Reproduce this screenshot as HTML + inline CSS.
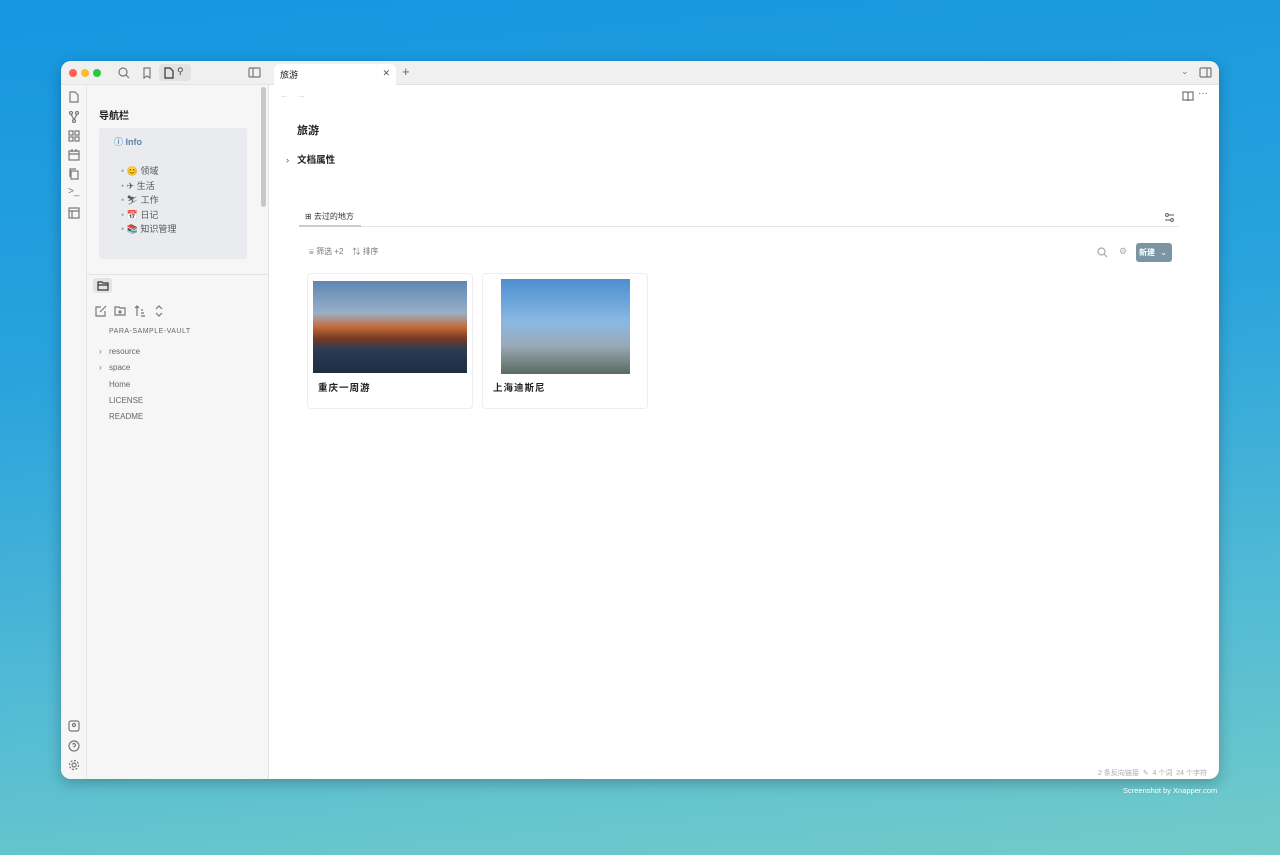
<!DOCTYPE html>
<html><head><meta charset="utf-8"><style>
*{box-sizing:border-box;margin:0;padding:0}
body{width:1280px;height:855px;overflow:hidden;font-family:"Liberation Sans","Noto Sans CJK SC",sans-serif;background:linear-gradient(175deg,#1596e0 0%,#2aa3dc 40%,#55bcd4 75%,#72cbc8 100%);position:relative}
.win{position:absolute;left:61px;top:61px;width:1158px;height:718px;background:#fff;border-radius:10px;overflow:hidden;box-shadow:0 4px 14px rgba(0,0,0,.25)}
.ribbon{position:absolute;left:0;top:0;width:26px;height:100%;background:#f6f6f6;border-right:1px solid #e6e6e6}
.side{position:absolute;left:26px;top:0;width:182px;height:100%;background:#f6f6f6;border-right:1px solid #e3e3e3}
.top{position:absolute;left:0;top:0;width:208px;height:24px;background:#f0f0f0;border-bottom:1px solid #e3e3e3}
.dot{position:absolute;top:8px;width:8px;height:8px;border-radius:50%}
.ic{position:absolute;stroke:#777;fill:none;stroke-width:1.2}
.main{position:absolute;left:208px;top:0;right:0;height:100%}
.tabbar{height:24px;background:#f0f0f0;border-bottom:1px solid #e3e3e3;position:relative}
.tab{position:absolute;left:5px;top:3px;width:122px;height:22px;background:#fff;border-radius:6px 6px 0 0;font-size:9px;padding:4px 6px;color:#222}
.t{position:absolute;white-space:nowrap}
.card{position:absolute;top:212px;width:166px;height:136px;border:1px solid #eee;border-radius:4px;background:#fff}
</style></head><body>
<div class="win">
 <div class="top">
  <div class="dot" style="left:8px;background:#fe5f57"></div>
  <div class="dot" style="left:20px;background:#febc2e"></div>
  <div class="dot" style="left:32px;background:#28c840"></div>
  <svg class="ic" style="left:57px;top:6px" width="12" height="12"><circle cx="5" cy="5" r="4"/><path d="M8 8l3 3"/></svg>
  <svg class="ic" style="left:80px;top:6px" width="12" height="12"><path d="M3 1h6v10l-3-2-3 2z"/></svg>
  <div style="position:absolute;left:98px;top:3px;width:32px;height:17px;background:#e2e2e2;border-radius:4px"></div>
  <svg class="ic" style="left:102px;top:6px;stroke:#333" width="12" height="12"><path d="M2 1h5l3 3v7H2z"/></svg>
  <span class="t" style="left:116px;top:5px;font-size:9px;color:#444">⚲</span>
  <svg class="ic" style="left:187px;top:6px" width="13" height="12"><rect x="1" y="1" width="11" height="9" rx="1"/><path d="M5 1v9"/></svg>
 </div>
 <div class="ribbon" style="top:24px">
  <svg class="ic" style="left:7px;top:6px" width="12" height="12"><path d="M2 1h5l3 3v7H2z"/></svg>
  <svg class="ic" style="left:7px;top:26px" width="12" height="12"><circle cx="3" cy="2" r="1.5"/><circle cx="9" cy="2" r="1.5"/><circle cx="6" cy="10" r="1.5"/><path d="M3 3l3 6M9 3l-3 6"/></svg>
  <svg class="ic" style="left:7px;top:45px" width="12" height="12"><rect x="1" y="1" width="4" height="4"/><rect x="7" y="1" width="4" height="4"/><rect x="1" y="7" width="4" height="4"/><rect x="7" y="7" width="4" height="4"/></svg>
  <svg class="ic" style="left:7px;top:64px" width="12" height="12"><rect x="1" y="2" width="10" height="9"/><path d="M1 5h10M4 0v3M8 0v3"/></svg>
  <svg class="ic" style="left:7px;top:83px" width="12" height="12"><rect x="3" y="3" width="7" height="8"/><path d="M2 9V1h6"/></svg>
  <span class="t" style="left:7px;top:101px;font-size:10px;color:#777">&gt;_</span>
  <svg class="ic" style="left:7px;top:122px" width="12" height="12"><rect x="1" y="1" width="10" height="10"/><path d="M1 4h10M4 4v7"/></svg>
  <svg class="ic" style="left:7px;top:635px" width="12" height="12"><rect x="1" y="1" width="10" height="10" rx="2"/><circle cx="6" cy="5" r="1.5"/></svg>
  <svg class="ic" style="left:7px;top:655px" width="12" height="12"><circle cx="6" cy="6" r="5"/><path d="M4.5 4.5a1.5 1.5 0 1 1 1.5 2v1"/></svg>
  <svg class="ic" style="left:7px;top:674px" width="12" height="12"><circle cx="6" cy="6" r="2"/><circle cx="6" cy="6" r="4.5" stroke-dasharray="2 1.5"/></svg>
 </div>
 <div class="side" style="top:24px;height:694px">
  <div style="position:absolute;right:2px;top:2px;width:5px;height:120px;background:#c8c8c8;border-radius:3px"></div>
  <div class="t" style="left:12px;top:22px;font-size:10px;font-weight:bold;color:#222">导航栏</div>
  <div style="position:absolute;left:12px;top:43px;width:148px;height:131px;background:#e9ebee;border-radius:3px"></div>
  <div class="t" style="left:27px;top:50px;font-size:9px;color:#5b82ac;font-weight:bold">ⓘ Info</div>
  <div class="t" style="left:34px;top:79px;font-size:9px;color:#555;line-height:14.5px">
   <span style="color:#aaa">•</span> 😊 领域<br><span style="color:#aaa">•</span> ✈ 生活<br><span style="color:#aaa">•</span> ⛷ 工作<br><span style="color:#aaa">•</span> 📅 日记<br><span style="color:#aaa">•</span> 📚 知识管理</div>
  <div style="position:absolute;left:0;top:189px;width:181px;height:1px;background:#e3e3e3"></div>
  <div style="position:absolute;left:6px;top:193px;width:19px;height:15px;background:#e4e4e4;border-radius:3px"></div>
  <svg class="ic" style="left:10px;top:195px;stroke:#333" width="12" height="11"><path d="M1 2h4l1 1h5v7H1z M1 5h10"/></svg>
  <svg class="ic" style="left:8px;top:220px" width="12" height="12"><path d="M10 6v5H1V2h5M5 7l6-6"/></svg>
  <svg class="ic" style="left:27px;top:220px" width="12" height="12"><path d="M1 2h4l1 1h5v7H1z M6 5v4M4 7h4"/></svg>
  <svg class="ic" style="left:47px;top:220px" width="12" height="12"><path d="M3 1v10M1 3l2-2 2 2M7 5h2M7 8h3M7 11h4"/></svg>
  <svg class="ic" style="left:66px;top:220px" width="12" height="12"><path d="M3 4l3-3 3 3M3 8l3 3 3-3"/></svg>
  <div class="t" style="left:22px;top:243px;font-size:7px;color:#666;letter-spacing:.5px">PARA-SAMPLE-VAULT</div>
  <div class="t" style="left:12px;top:259px;font-size:8px;color:#666;line-height:16.3px">›</div>
  <div class="t" style="left:12px;top:275px;font-size:8px;color:#666;line-height:16.3px">›</div>
  <div class="t" style="left:22px;top:259px;font-size:8px;color:#666;line-height:16.3px">resource<br>space<br>Home<br>LICENSE<br>README</div>
 </div>
 <div class="main">
  <div class="tabbar">
   <div class="tab">旅游<span style="position:absolute;right:6px;top:4px;color:#555">✕</span></div>
   <span class="t" style="left:133px;top:3px;font-size:13px;color:#666">+</span>
   <span class="t" style="left:912px;top:5px;font-size:9px;color:#777">⌄</span>
   <svg class="ic" style="left:930px;top:6px" width="13" height="12"><rect x="1" y="1" width="11" height="9" rx="1"/><path d="M8 1v9"/></svg>
  </div>
  <span class="t" style="left:11px;top:29px;font-size:9px;color:#ccc">←&nbsp;&nbsp; →</span>
  <svg class="ic" style="left:913px;top:30px" width="12" height="10"><path d="M1 1h4l1 1 1-1h4v8H7l-1 1-1-1H1zM6 2v7"/></svg>
  <span class="t" style="left:929px;top:27px;font-size:10px;color:#666">···</span>
  <div class="t" style="left:28px;top:61px;font-size:11px;font-weight:bold;color:#222">旅游</div>
  <div class="t" style="left:17px;top:91px;font-size:9.5px;font-weight:bold;color:#222"><span style="font-weight:normal;color:#555">›</span>&nbsp;&nbsp; 文档属性</div>
  <div class="t" style="left:36px;top:150px;font-size:8px;color:#333">⊞ 去过的地方</div>
  <div style="position:absolute;left:30px;top:165px;width:880px;height:1px;background:#e5e5e5"></div>
  <div style="position:absolute;left:30px;top:164px;width:62px;height:2px;background:#ccc"></div>
  <svg class="ic" style="left:895px;top:151px" width="11" height="11"><path d="M1 3h9M1 8h9"/><circle cx="3" cy="3" r="1.5" fill="#fff"/><circle cx="8" cy="8" r="1.5" fill="#fff"/></svg>
  <div class="t" style="left:40px;top:185px;font-size:8px;color:#777">⩸ 筛选 +2&nbsp;&nbsp;&nbsp; ⇅ 排序</div>
  <svg class="ic" style="left:828px;top:186px;stroke:#aaa" width="11" height="11"><circle cx="4.5" cy="4.5" r="3.5"/><path d="M7 7l3 3"/></svg>
  <span class="t" style="left:850px;top:185px;font-size:9px;color:#aaa">⚙</span>
  <div style="position:absolute;left:867px;top:182px;width:36px;height:19px;background:#7c95a5;border-radius:3px;color:#fff;font-size:8px;font-weight:bold;padding:4px 3px">新建 <span style="font-weight:normal;margin-left:3px">⌄</span></div>
  <div class="card" style="left:38px">
   <div style="position:absolute;left:5px;top:7px;width:154px;height:92px;background:linear-gradient(180deg,#5d87b5 0%,#9ab0c5 35%,#c46a3a 50%,#7a3a22 62%,#2b3b55 75%,#1f2d3f 100%)"></div>
   <div class="t" style="left:10px;top:106px;font-size:9.5px;font-weight:bold;color:#222;letter-spacing:1px">重庆一周游</div>
  </div>
  <div class="card" style="left:213px">
   <div style="position:absolute;left:18px;top:5px;width:129px;height:95px;background:linear-gradient(180deg,#4c8fd0 0%,#8ab8e3 45%,#9aa9b8 70%,#5b6a5e 100%)"></div>
   <div class="t" style="left:10px;top:106px;font-size:9.5px;font-weight:bold;color:#222;letter-spacing:1px">上海迪斯尼</div>
  </div>
  <div class="t" style="left:829px;top:707px;font-size:7px;color:#aaa">2 条反向链接 &nbsp;✎ &nbsp;4 个词 &nbsp;24 个字符</div>
 </div>
</div>
<div class="t" style="left:1123px;top:786px;font-size:7.5px;color:#fff">Screenshot by Xnapper.com</div>
</body></html>
